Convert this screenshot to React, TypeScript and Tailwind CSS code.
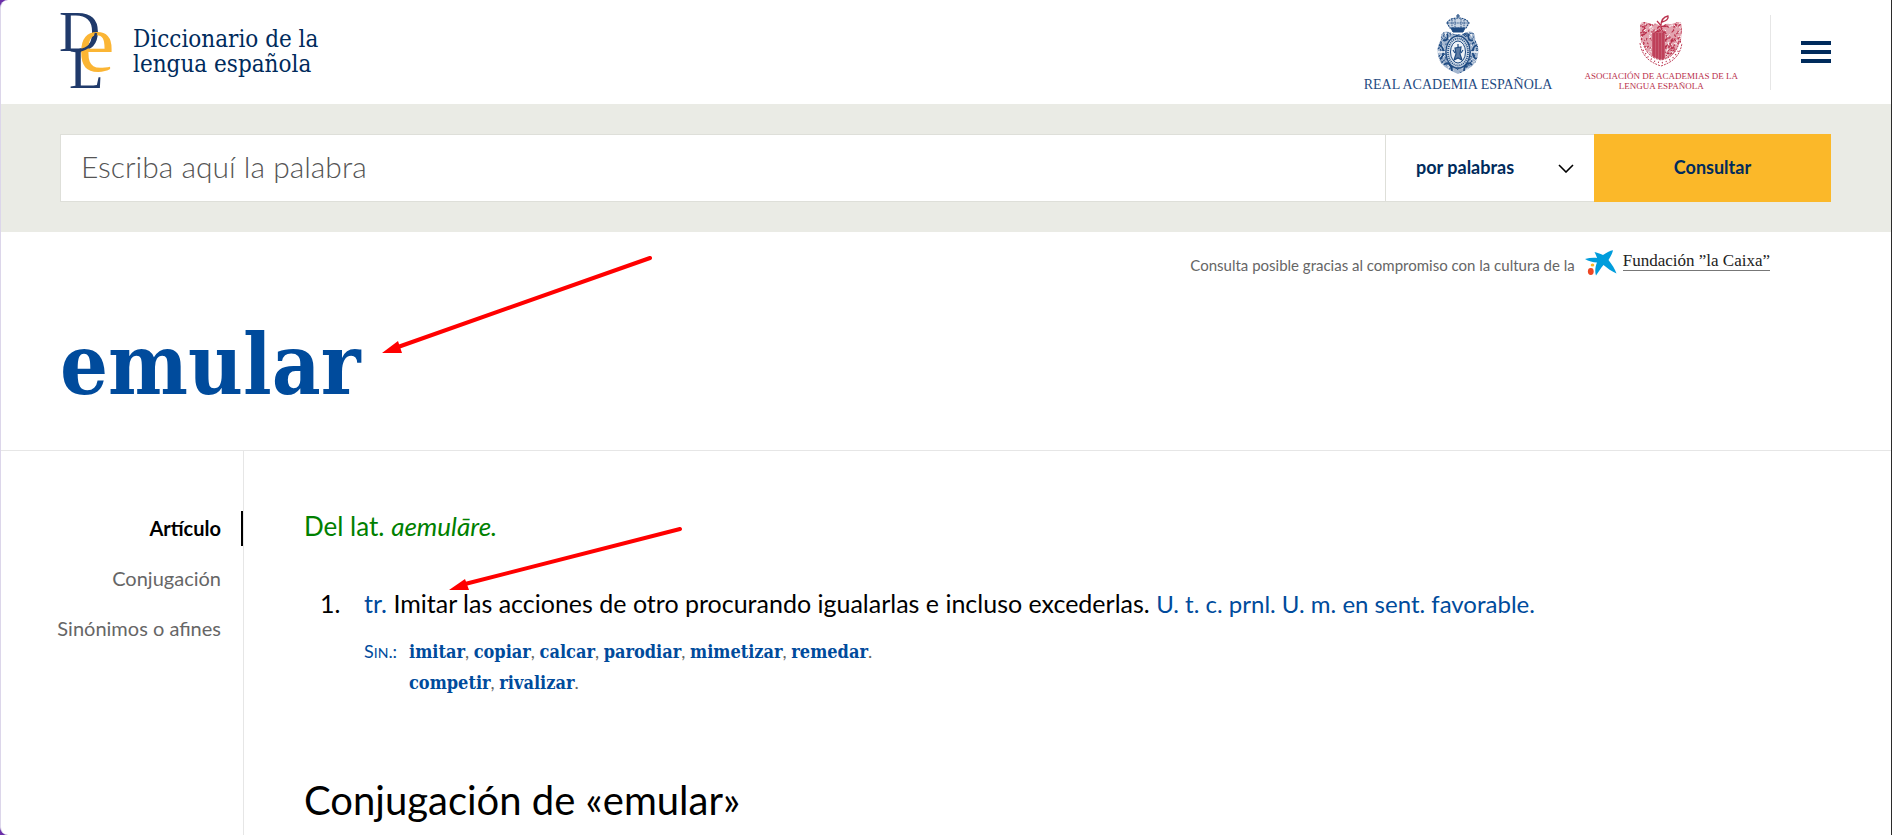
import React from "react";

const serif = "font-['DejaVu_Serif_Condensed','DejaVu_Serif',serif]";

/* Short engraved strokes spread over a crest, the same on every render. */
function engraving(width: number, top: number, bottom: number, count: number, seed: number) {
  let s = seed;
  const next = () => (s = (s * 16807) % 2147483647) / 2147483647;
  let d = "";
  for (let i = 0; i < count; i++) {
    const x = next() * width;
    const y = top + next() * (bottom - top);
    const a = next() * Math.PI * 2;
    const r = 1 + next() * 1.6;
    d += `M${x.toFixed(1)} ${y.toFixed(1)}q${(Math.sin(a) * r).toFixed(1)} ${(Math.cos(a) * r).toFixed(1)} ${(Math.cos(a) * r).toFixed(1)} ${(Math.sin(a) * r).toFixed(1)}`;
  }
  return d;
}

function DleLogo() {
  return (
    <svg width="54" height="78" viewBox="0 0 54 78" className="shrink-0 overflow-visible" role="img" aria-label="DLE">
      <g fontFamily="'Liberation Serif', serif">
        <text x="-1" y="38" fontSize="57" fill="#203a6b">D</text>
        <text x="9" y="75" fontSize="57" fill="#203a6b">L</text>
        <text x="18" y="58" fontSize="82" fill="#fbb534">e</text>
      </g>
      <path d="M36 20C34 30 29 36 19 37.500" fill="none" stroke="#203a6b" strokeWidth="2.500" />
    </svg>
  );
}

function AcademyCrest() {
  return (
    <svg width="42" height="60" viewBox="0 0 42 60" fill="none" stroke="#1f4b82" aria-hidden="true">
      <defs>
        <clipPath id="academy-body">
          <path d="M12 18C7 16 3 20 4 26C-1 32 0 43 4 49C8 54 14 57 21 60C28 57 34 54 38 49C42 43 43 32 38 26C39 20 35 16 30 18L25 20H17Z" />
        </clipPath>
      </defs>
      <path d="M21 0V5M19 2H23" strokeWidth="1.200" />
      <path d="M10 9C12 5 17 4 21 4C25 4 30 5 32 9L29 14H13Z" fill="#c9d5e4" strokeWidth="1.200" strokeDasharray="2 0.700" />
      <path d="M15 6V13M18 5V13M24 5V13M27 6V13M11 9H31" strokeWidth="0.900" strokeDasharray="1.500 0.800" />
      <path d="M14 14H28L26 18H16Z" fill="#1f4b82" />
      <g clipPath="url(#academy-body)">
        <rect x="0" y="16" width="42" height="44" fill="#a3b6cf" stroke="none" />
        <path d={engraving(42, 17, 60, 230, 41)} strokeWidth="1" />
        <path d={engraving(42, 17, 60, 90, 97)} stroke="#fff" strokeWidth="0.900" />
        <path d="M6 26C10 28 12 23 10 20M36 26C32 28 30 23 32 20M2 31C8 33 7 42 3 45M40 31C34 33 35 42 39 45M7 51C11 46 15 52 15 57M35 51C31 46 27 52 27 57" strokeWidth="1.800" />
      </g>
      <ellipse cx="21" cy="38" rx="12" ry="16" fill="#cfdae7" strokeWidth="1.300" />
      <ellipse cx="21" cy="38" rx="10" ry="13.500" strokeWidth="1.800" strokeDasharray="1 1" />
      <ellipse cx="21" cy="38" rx="7.500" ry="11" fill="#eef2f7" strokeWidth="1" />
      <path d="M21 30V33M18 34L24 33L23 40L25 46L21 44L17 46L19 40Z" fill="#5a7aa3" strokeWidth="1.200" />
      <path d="M16 36L18 39M26 36L24 39" strokeWidth="1.200" />
      <path d="M1 38H8M34 38H41" stroke="#fff" strokeWidth="1.500" />
    </svg>
  );
}

function AssociationCrest() {
  return (
    <svg width="44" height="52" viewBox="0 0 44 52" fill="none" stroke="#b92f4b" aria-hidden="true">
      <defs>
        <clipPath id="association-body">
          <path d="M2 8C6 5 10 10 15 9C18 8 20 11 22 11C25 11 27 8 30 9C35 10 38 5 42 8C44 14 42 20 42 27C41 36 34 43 22 46C10 43 3 36 2 27C2 20 0 14 2 8Z" />
        </clipPath>
      </defs>
      <path d="M22 11C20 8 19 7 18 6M22 11C22 6 24 2 29 1C30 4 27 6 23 7" strokeWidth="1.300" />
      <g clipPath="url(#association-body)">
        <rect x="0" y="5" width="44" height="42" fill="#e3a3af" stroke="none" />
        <path d={engraving(44, 6, 46, 220, 23)} strokeWidth="1.100" />
        <path d={engraving(44, 6, 46, 80, 71)} stroke="#fff" strokeWidth="1" />
        <path d="M13 18H26V46H13Z" fill="#c75b71" stroke="none" />
        <path d="M12 17H27M15 18V42M18 18V44M21 18V44M24 18V44" strokeWidth="1.200" />
      </g>
      <path d="M2 28C5 39 11 44 22 47C33 44 39 39 42 28" stroke="#fff" strokeWidth="4" />
      <path d="M1 28C3 41 10 47 22 51C34 47 41 41 43 28M4 28C7 38 12 43 22 45C32 43 37 38 40 28" strokeWidth="0.900" strokeDasharray="2 1" />
      <path d="M4 35L9 42L15 46L22 48L29 46L35 42L40 35" strokeWidth="1.400" strokeDasharray="1 3" />
    </svg>
  );
}

function StarLogo() {
  return (
    <svg width="32" height="26" viewBox="0 0 32 26" className="shrink-0" aria-hidden="true">
      <path d="M0 9C4 8 8 7.500 12 8C11.500 6 10.500 4 9.500 2C13 3 16 4 18 5C21 3 25 0.500 28 0.200C27.500 3 25.500 7 23.500 10C27 14.500 30 19 31.500 23.500C27 21.500 22 18 18.500 15C16 17.500 13.500 22 11 25.500C9.500 21 10.500 16 12 12.500C8 12.500 3.500 11 0 9Z" fill="#009ddc" />
      <ellipse cx="7.500" cy="15" rx="1.800" ry="1.500" fill="#fbb827" />
      <ellipse cx="5.800" cy="21.500" rx="2.900" ry="3.400" fill="#ee4723" />
    </svg>
  );
}

function Arrows() {
  return (
    <svg className="pointer-events-none absolute top-0 left-0" width="700" height="610" viewBox="0 0 700 610" fill="#ff0000" stroke="#ff0000" aria-hidden="true">
      <path d="M649 258L397 347M679 529L464 584" fill="none" strokeWidth="4" strokeLinecap="round" />
      <path d="M381 353L397 341L401 353ZM448 590L464 579L468 590Z" stroke="none" />
    </svg>
  );
}

function Synonyms({ words }: { words: string[] }) {
  return (
    <p>
      {words.map((word, i) => (
        <React.Fragment key={word}>
          <a href={`#${word}`} className={`font-bold text-[#004b9c] ${serif}`}>{word}</a>
          {i < words.length - 1 ? ", " : "."}
        </React.Fragment>
      ))}
    </p>
  );
}

export default function App() {
  return (
    <div className="bg-[#6b2fa8] font-[Lato,sans-serif] text-black">
      <div className="relative flex min-h-screen flex-col overflow-hidden rounded-l-lg border-r border-l border-r-[#2b2b2b] border-l-[#dcd6ea] bg-white">
        <header className="flex h-[104px] items-center justify-between pr-[60px] pl-[59px]">
          <a href="#inicio" className="flex items-center gap-[19px]">
            <DleLogo />
            <span className={`text-2xl leading-[25px] text-[#002b5c] ${serif}`}>
              Diccionario de la
              <br />
              lengua española
            </span>
          </a>
          <div className="flex items-center">
            <a href="#rae" className="flex flex-col items-center gap-[3px] pt-[2px] font-['Liberation_Serif',serif] text-sm leading-4 whitespace-nowrap text-[#1f4b82]">
              <AcademyCrest />
              REAL ACADEMIA ESPAÑOLA
            </a>
            <a href="#asale" className="ml-8 flex flex-col items-center gap-1 pt-[2px] text-center font-['Liberation_Serif',serif] text-[9px] leading-[10px] whitespace-nowrap text-[#b92f4b]">
              <AssociationCrest />
              <span>
                ASOCIACIÓN DE ACADEMIAS DE LA
                <br />
                LENGUA ESPAÑOLA
              </span>
            </a>
            <div className="ml-8 flex h-[75px] items-center border-l border-[#e6e6e6] pl-[30px]">
              <button type="button" aria-label="Menú" className="flex w-[30px] flex-col gap-[5px]">
                <span className="h-1 bg-[#002b5c]" />
                <span className="h-1 bg-[#002b5c]" />
                <span className="h-1 bg-[#002b5c]" />
              </button>
            </div>
          </div>
        </header>

        <form className="flex bg-[#eaebe5] py-[30px] pr-[60px] pl-[59px]" onSubmit={(e) => e.preventDefault()}>
          <input
            type="text"
            aria-label="Palabra"
            placeholder="Escriba aquí la palabra"
            className="h-[68px] min-w-0 flex-1 border border-[#dedfd9] bg-white px-5 pb-1 text-3xl font-light outline-none placeholder:text-[#555]"
          />
          <div className="relative w-[208px] shrink-0">
            <select aria-label="Modo de búsqueda" className="h-[68px] w-full appearance-none border-y border-[#dedfd9] bg-white pb-[2px] pl-[30px] text-lg font-bold text-[#002b5c] outline-none">
              <option>por palabras</option>
            </select>
            <svg className="pointer-events-none absolute top-[30px] right-[20px]" width="16" height="9" viewBox="0 0 16 9" fill="none" stroke="#000" strokeWidth="1.600" aria-hidden="true">
              <path d="M1 1L8 8L15 1" />
            </svg>
          </div>
          <button type="submit" className="h-[68px] w-[237px] shrink-0 bg-[#fbb829] pb-[2px] text-lg font-bold text-[#002b5c]">
            Consultar
          </button>
        </form>

        <div className="flex items-start justify-end gap-[10px] pt-[18px] pr-[121px]">
          <p className="pt-[3px] text-[15px] leading-6 text-[#666]">Consulta posible gracias al compromiso con la cultura de la</p>
          <a href="#fundacion" className="flex items-start gap-[6px]">
            <StarLogo />
            <span className="border-b border-[#777] pt-[2px] font-['Liberation_Serif',serif] text-[17px] leading-[18px] text-[#222]">Fundación ”la Caixa”</span>
          </a>
        </div>

        <h1 className={`mt-[38px] border-b border-[#e6e6e6] pb-[35px] pl-[59px] text-[84px] leading-[100px] font-bold text-[#004b9c] ${serif}`}>
          emular
        </h1>

        <div className="flex flex-1">
          <nav className="flex w-[243px] shrink-0 flex-col items-stretch gap-[15px] border-r border-[#e6e6e6] pt-[60px] text-right text-xl leading-[35px] text-[#666]">
            <a href="#articulo" className="border-r-2 border-black pr-5 font-bold text-black">Artículo</a>
            <a href="#conjugacion" className="pr-[22px]">Conjugación</a>
            <a href="#sinonimos" className="pr-[22px]">Sinónimos o afines</a>
          </nav>
          <main className="pt-[59px] pl-[60px]">
            <p className="text-[26px] leading-8 text-[#008000]">
              Del lat. <i>aemulāre.</i>
            </p>
            <ol className="mt-[45px] pl-4">
              <li className="flex text-[25px] leading-8">
                <span className="w-11 shrink-0">1.</span>
                <div>
                  <p>
                    <abbr className="text-[#004b9c] no-underline">tr.</abbr> Imitar las acciones de otro procurando igualarlas e incluso excederlas.{" "}
                    <span className="text-2xl leading-8 text-[#004b9c]">U. t. c. prnl. U. m. en sent. favorable.</span>
                  </p>
                  <div className="mt-4 flex text-lg leading-[31px] text-[#666]">
                    <span className="w-[45px] shrink-0 whitespace-nowrap text-[#004b9c]">
                      S<span className="text-sm">IN</span>.:
                    </span>
                    <div>
                      <Synonyms words={["imitar", "copiar", "calcar", "parodiar", "mimetizar", "remedar"]} />
                      <Synonyms words={["competir", "rivalizar"]} />
                    </div>
                  </div>
                </div>
              </li>
            </ol>
            <h2 className="mt-[77px] text-[40px] leading-[50px]">Conjugación de «emular»</h2>
          </main>
        </div>
        <Arrows />
      </div>
    </div>
  );
}
